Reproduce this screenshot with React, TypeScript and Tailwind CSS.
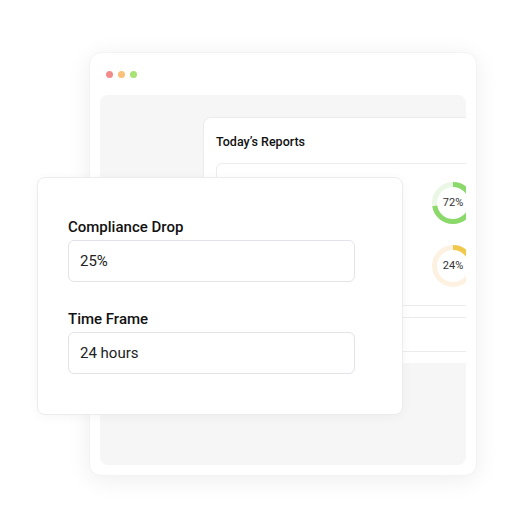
import React from "react";

function Donut({ pct, color, track }: { pct: number; color: string; track: string }) {
  const r = 18.5;
  const c = 2 * Math.PI * r;
  return (
    <div className="relative w-[44px] h-[44px]">
      <svg width="44" height="44" viewBox="0 0 44 44">
        <circle cx="22" cy="22" r={r} fill="none" stroke={track} strokeWidth="5" />
        <circle
          cx="22"
          cy="22"
          r={r}
          fill="none"
          stroke={color}
          strokeWidth="5"
          strokeDasharray={`${(c * pct) / 100} ${c}`}
          transform="rotate(-90 22 22)"
        />
      </svg>
      <span className="absolute inset-0 flex items-center justify-center text-[11px] text-[#333]">
        {pct}%
      </span>
    </div>
  );
}

function Field({ label, value }: { label: string; value: string }) {
  return (
    <div className="flex flex-col">
      <span className="text-[15px] font-medium text-[#111] leading-5 mb-[3px]">{label}</span>
      <div className="h-[42px] w-[287px] rounded-md border border-[#e3e2e8] bg-white px-[11px] flex items-center text-[15px] text-[#222]">
        {value}
      </div>
    </div>
  );
}

export default function App() {
  return (
    <div
      className="relative w-[510px] h-[528px] bg-white overflow-hidden"
      style={{ fontFamily: "Roboto, 'Noto Sans', sans-serif" }}
    >
      {/* window */}
      <div className="ml-[89px] mt-[52px] w-[388px] h-[424px] rounded-xl bg-white shadow-[0_4px_24px_rgba(0,0,0,0.07)] border border-[#f3f3f3] flex flex-col px-[10px] pb-[10px]">
        <div className="h-[42px] flex items-center gap-[5px] pl-[6px]">
          <span className="w-[7px] h-[7px] rounded-full bg-[#f28b8b]" />
          <span className="w-[7px] h-[7px] rounded-full bg-[#fbc07a]" />
          <span className="w-[7px] h-[7px] rounded-full bg-[#a6e274]" />
        </div>
        <div className="flex-1 rounded-lg bg-[#f6f6f6] overflow-hidden pl-[103px] pt-[22px]">
          <div className="w-[300px] h-[246px] bg-white rounded-tl-lg border-l border-t border-[#ececec] pl-[12px] pt-[14px]">
            <div className="text-[12.5px] font-medium text-[#111] leading-5">Today’s Reports</div>
            <div className="mt-[11px] h-[143px] w-[290px] rounded-md border border-[#ececec] flex flex-col items-start pl-[214px] pt-[17px] gap-[19px]">
              <Donut pct={72} color="#8bd86b" track="#eaf7e4" />
              <Donut pct={24} color="#f0c94c" track="#fdf2e2" />
            </div>
            <div className="mt-[11px] h-[35px] w-[290px] border-y border-[#ececec]" />
          </div>
        </div>
      </div>

      {/* form card overlay */}
      <div className="absolute left-[37px] top-[177px] w-[366px] h-[238px] rounded-lg bg-white border border-[#ececec] shadow-[0_2px_12px_rgba(0,0,0,0.04)] pl-[30px] pt-[39px] flex flex-col gap-[27px]">
        <Field label="Compliance Drop" value="25%" />
        <Field label="Time Frame" value="24 hours" />
      </div>
    </div>
  );
}
